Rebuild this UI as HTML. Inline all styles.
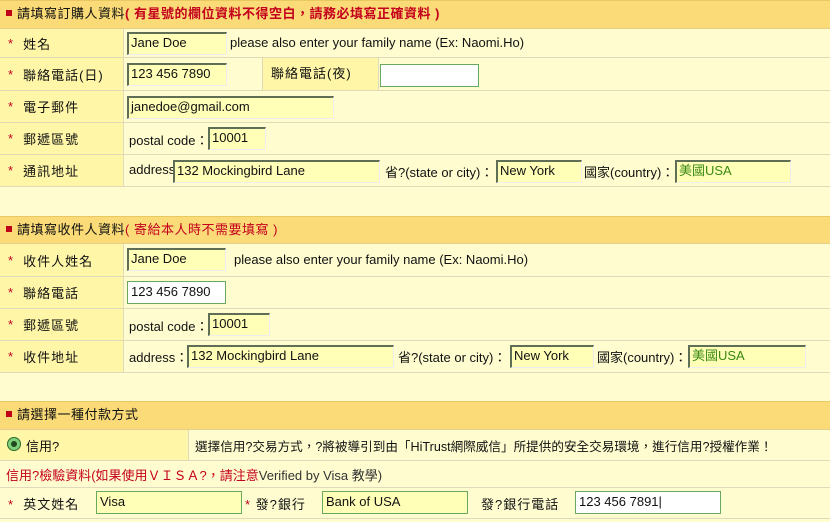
<!DOCTYPE html>
<html><head><meta charset="utf-8"><style>
body{margin:0;width:830px;height:522px;background:#FFFDD0;position:relative;overflow:hidden;font-family:"Liberation Sans","Noto Sans CJK TC",sans-serif;font-size:13px;color:#111}
div{position:absolute;box-sizing:border-box}
.h{left:0;width:830px;background:#FADB78;border-top:1px solid #e8c860;border-bottom:1px solid #e6cf8c;line-height:26px;padding-left:6px;letter-spacing:0.5px}
.h .sq{display:inline-block;width:6px;height:6px;background:#c00018;margin-right:5px;vertical-align:2px}
.r{color:#c4001c}
.rb{color:#c4001c;font-weight:bold}
.row{left:0;width:830px;border-bottom:1px solid #e0dab8;background:#FFFDD0}
.lab{left:0;width:124px;top:0;bottom:0;background:#FFF6A8;border-right:1px solid #e0dab8;padding-left:8px;letter-spacing:1px;display:flex;align-items:center}
.lab b{color:#c4001c;font-weight:normal;margin-right:9px}
.t{white-space:nowrap}
.in{height:23px;background:#FFFFB8;border-top:2px solid #5f6f55;border-left:2px solid #5f6f55;border-right:1px solid #eee;border-bottom:1px solid #eee;padding:0 2px;line-height:17px;white-space:nowrap}
.g{background:#fff;border:1px solid #6aa860;padding:1px 3px}
.gy{background:#FFFFB8;border:1px solid #6aa860;padding:1px 3px}
</style></head><body>

<div class="h" style="top:0;height:29px"><span class="sq"></span>請填寫訂購人資料<span class="rb">( 有星號的欄位資料不得空白，請務必填寫正確資料 )</span></div>

<div class="row" style="top:29px;height:29px"><div class="lab"><b>*</b>姓名</div>
<div class="in" style="left:127px;top:3px;width:100px">Jane Doe</div><div class="t" style="left:230px;top:6px">please also enter your family name (Ex: Naomi.Ho)</div></div>

<div class="row" style="top:58px;height:33px"><div class="lab"><b>*</b>聯絡電話(日)</div>
<div class="in" style="left:127px;top:5px;width:100px">123 456 7890</div>
<div style="left:262px;top:0;bottom:0;width:117px;background:#FFF6A8;border-left:1px solid #e0dab8;border-right:1px solid #e0dab8;padding-left:8px;line-height:32px;letter-spacing:1px">聯絡電話(夜)</div>
<div class="in g" style="left:380px;top:6px;width:99px"></div></div>

<div class="row" style="top:91px;height:32px"><div class="lab"><b>*</b>電子郵件</div>
<div class="in" style="left:127px;top:5px;width:207px">janedoe@gmail.com</div></div>

<div class="row" style="top:123px;height:32px"><div class="lab"><b>*</b>郵遞區號</div>
<div class="t" style="left:129px;top:7px">postal code：</div><div class="in" style="left:208px;top:4px;width:58px">10001</div></div>

<div class="row" style="top:155px;height:32px"><div class="lab"><b>*</b>通訊地址</div>
<div class="t" style="left:129px;top:7px">address</div><div class="in" style="left:173px;top:5px;width:207px">132 Mockingbird Lane</div>
<div class="t" style="left:385px;top:7px">省?(state or city)：</div><div class="in" style="left:496px;top:5px;width:86px">New York</div>
<div class="t" style="left:584px;top:7px">國家(country)：</div><div class="in" style="left:675px;top:5px;width:116px;color:#3a8a10">美國USA</div></div>

<div class="h" style="top:216px;height:28px"><span class="sq"></span>請填寫收件人資料<span class="r">( 寄給本人時不需要填寫 )</span></div>

<div class="row" style="top:244px;height:33px"><div class="lab"><b>*</b>收件人姓名</div>
<div class="in" style="left:127px;top:4px;width:99px">Jane Doe</div><div class="t" style="left:234px;top:8px">please also enter your family name (Ex: Naomi.Ho)</div></div>

<div class="row" style="top:277px;height:32px"><div class="lab"><b>*</b>聯絡電話</div>
<div class="in g" style="left:127px;top:4px;width:99px">123 456 7890</div></div>

<div class="row" style="top:309px;height:32px"><div class="lab"><b>*</b>郵遞區號</div>
<div class="t" style="left:129px;top:7px">postal code：</div><div class="in" style="left:208px;top:4px;width:62px">10001</div></div>

<div class="row" style="top:341px;height:32px"><div class="lab"><b>*</b>收件地址</div>
<div class="t" style="left:129px;top:6px">address：</div><div class="in" style="left:187px;top:4px;width:207px">132 Mockingbird Lane</div>
<div class="t" style="left:398px;top:6px">省?(state or city)：</div><div class="in" style="left:510px;top:4px;width:84px">New York</div>
<div class="t" style="left:597px;top:6px">國家(country)：</div><div class="in" style="left:688px;top:4px;width:118px;color:#3a8a10">美國USA</div></div>

<div class="h" style="top:401px;height:29px"><span class="sq"></span>請選擇一種付款方式</div>

<div class="row" style="top:430px;height:31px"><div style="left:0;top:0;bottom:0;width:189px;background:#FFF6A8;border-right:1px solid #e0dab8"></div>
<div style="left:7px;top:7px;width:14px;height:14px;border-radius:50%;background:#7fd07a;border:1px solid #2b6a2b"></div><div style="left:11px;top:11px;width:6px;height:6px;border-radius:50%;background:#1f4a1f"></div>
<div class="t" style="left:26px;top:6px">信用?</div>
<div class="t" style="left:195px;top:6px;font-size:12.6px">選擇信用?交易方式，?將被導引到由「HiTrust網際威信」所提供的安全交易環境，進行信用?授權作業！</div></div>

<div class="row" style="top:461px;height:27px"><div class="t r" style="left:6px;top:4px">信用?檢驗資料(如果使用ＶＩＳＡ?，請注意<span style="color:#333">Verified by Visa 教學)</span></div></div>

<div class="row" style="top:488px;height:31px">
<div class="t" style="left:8px;top:6px;letter-spacing:1px"><span class="r">*</span>&nbsp; 英文姓名</div>
<div class="in gy" style="left:96px;top:3px;width:146px">Visa</div>
<div class="t" style="left:245px;top:6px;letter-spacing:1px"><span class="r">*</span> 發?銀行</div>
<div class="in gy" style="left:322px;top:3px;width:146px">Bank of USA</div>
<div class="t" style="left:481px;top:6px;letter-spacing:1px">發?銀行電話</div>
<div class="in g" style="left:575px;top:3px;width:146px">123 456 7891|</div></div>

</body></html>
